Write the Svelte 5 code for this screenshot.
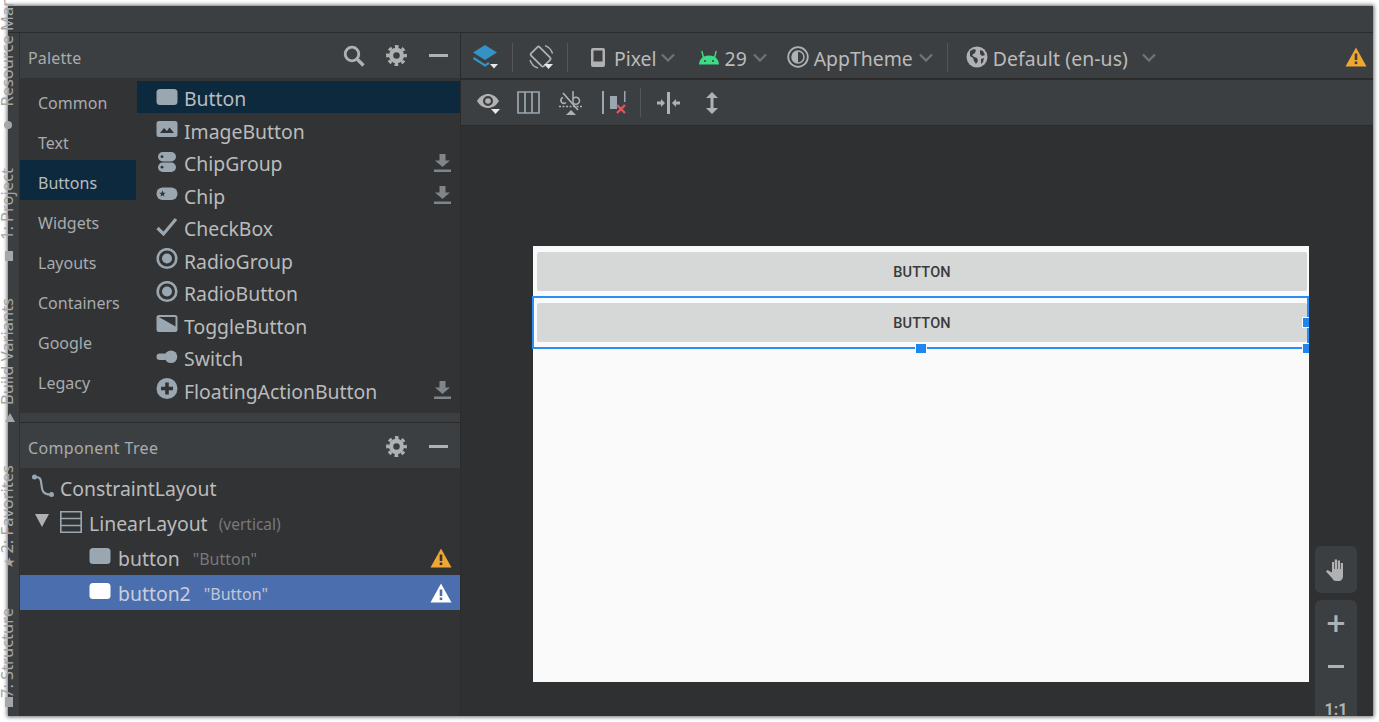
<script>
  const categories = ['Common', 'Text', 'Buttons', 'Widgets', 'Layouts', 'Containers', 'Google', 'Legacy'];
  const items = [
    { name: 'Button', icon: 'button' },
    { name: 'ImageButton', icon: 'image' },
    { name: 'ChipGroup', icon: 'chipgroup', dl: true },
    { name: 'Chip', icon: 'chip', dl: true },
    { name: 'CheckBox', icon: 'check' },
    { name: 'RadioGroup', icon: 'radio' },
    { name: 'RadioButton', icon: 'radio' },
    { name: 'ToggleButton', icon: 'toggle' },
    { name: 'Switch', icon: 'switch' },
    { name: 'FloatingActionButton', icon: 'fab', dl: true }
  ];
  const rail = [
    { label: 'Resource Manager', cls: 'r1' },
    { label: '1: Project', cls: 'r2' },
    { label: 'Build Variants', cls: 'r3' },
    { label: '2: Favorites', cls: 'r4' },
    { label: '7: Structure', cls: 'r5' }
  ];
</script>

{#snippet gear()}
  <svg class="hicon gear" viewBox="0 0 22 22"><circle cx="11" cy="11" r="8" fill="#afb1b3"/><circle cx="11" cy="11" r="9.400" fill="none" stroke="#afb1b3" stroke-width="3" stroke-dasharray="3.900 3.480" stroke-dashoffset="1.950"/><circle cx="11" cy="11" r="3.400" fill="#3c3f41"/></svg>
{/snippet}

{#snippet warn(color, mark)}
  <svg class="warn" viewBox="0 0 22 20"><path fill={color} d="M11 0.5 21.5 19.5H.5z"/><rect x="9.700" y="6.500" width="2.600" height="6.500" fill={mark}/><rect x="9.700" y="14.500" width="2.600" height="2.600" fill={mark}/></svg>
{/snippet}

{#snippet chev()}
  <svg class="chev" viewBox="0 0 14 9"><path fill="none" stroke="#6e7578" stroke-width="2.200" d="M1 1.500l6 6 6-6"/></svg>
{/snippet}

{#snippet btnIcon(color)}
  <svg class="ic" viewBox="0 0 22 22"><rect x="0.500" y="3" width="21" height="16" rx="3.500" fill={color}/></svg>
{/snippet}

{#snippet icon(name)}
  {#if name === 'button'}
    {@render btnIcon('#9aa7b0')}
  {:else if name === 'image'}
    <svg class="ic" viewBox="0 0 22 22"><rect x="0.500" y="3" width="21" height="16" rx="2.500" fill="#9aa7b0"/><path fill="#313335" d="M4 15l4-5 3 3 2.500-3.500L18 15z"/></svg>
  {:else if name === 'chipgroup'}
    <svg class="ic" viewBox="0 0 22 22"><rect x="2" y="1" width="18" height="9.500" rx="4.700" fill="#9aa7b0"/><rect x="2" y="11.500" width="18" height="9.500" rx="4.700" fill="#9aa7b0"/><circle cx="6" cy="5.700" r="1.400" fill="#313335"/><circle cx="6" cy="16.200" r="1.400" fill="#313335"/></svg>
  {:else if name === 'chip'}
    <svg class="ic" viewBox="0 0 22 22"><rect x="0.500" y="4.500" width="21" height="12.500" rx="6" fill="#9aa7b0"/><path fill="#313335" d="M6.500 7.500l.9 2.200 2.200.1-1.700 1.400.6 2.200-2-1.200-2 1.200.6-2.200-1.700-1.400 2.200-.1z"/></svg>
  {:else if name === 'check'}
    <svg class="ic" viewBox="0 0 22 22"><path fill="none" stroke="#9aa7b0" stroke-width="3.200" d="M1.500 12l6 6L20 3"/></svg>
  {:else if name === 'radio'}
    <svg class="ic" viewBox="0 0 22 22"><circle cx="11" cy="10.500" r="9.300" fill="none" stroke="#9aa7b0" stroke-width="2.600"/><circle cx="11" cy="10.500" r="5" fill="#9aa7b0"/></svg>
  {:else if name === 'toggle'}
    <svg class="ic" viewBox="0 0 22 22"><rect x="1.500" y="3" width="19" height="15" rx="1.500" fill="none" stroke="#9aa7b0" stroke-width="2"/><path fill="#9aa7b0" d="M2 3.500L20.500 14v4H2z"/></svg>
  {:else if name === 'switch'}
    <svg class="ic" viewBox="0 0 22 22"><rect x="0.500" y="7.500" width="11" height="6.500" rx="3.200" fill="#9aa7b0"/><circle cx="15" cy="10.700" r="6.300" fill="#9aa7b0"/></svg>
  {:else if name === 'fab'}
    <svg class="ic" viewBox="0 0 22 22"><circle cx="11" cy="10.500" r="10.500" fill="#9aa7b0"/><path fill="#313335" d="M9.200 4.500h3.600v4.200H17v3.600h-4.200v4.200H9.200v-4.200H5V8.700h4.200z"/></svg>
  {/if}
{/snippet}

<div class="window">
  <div class="topbar"></div>
  <div class="main">
    <div class="rail">
      {#each rail as r}
        <span class="railtext {r.cls}">{r.label}</span>
      {/each}
      <span class="rdot"></span>
      <span class="rsq a"></span>
      <span class="rtri"></span>
      <span class="rstar">★</span>
      <span class="rsq b"></span>
    </div>
    <div class="left">
      <div class="phead">
        <span class="ptitle">Palette</span>
        <svg class="hicon search" viewBox="0 0 22 22"><circle cx="9" cy="9" r="6.800" fill="none" stroke="#afb1b3" stroke-width="2.800"/><path stroke="#afb1b3" stroke-width="3.400" d="M14 14l6.500 6.500"/></svg>
        {@render gear()}
        <span class="minus"></span>
      </div>
      <div class="pbody">
        <div class="cats">
          {#each categories as c}
            <div class="cat" class:on={c === 'Buttons'}>{c}</div>
          {/each}
        </div>
        <div class="items">
          {#each items as it, i}
            <div class="item" class:on={i === 0}>
              {@render icon(it.icon)}
              <span class="iname">{it.name}</span>
              {#if it.dl}
                <svg class="dl" viewBox="0 0 17 19"><path fill="#7e868b" d="M5.500 0h6v6.500H16L8.500 13 1 6.500h4.500zM0 15.500h17V18H0z"/></svg>
              {/if}
            </div>
          {/each}
        </div>
      </div>
      <div class="band"></div>
      <div class="phead tree-head">
        <span class="ptitle">Component Tree</span>
        {@render gear()}
        <span class="minus"></span>
      </div>
      <div class="tree">
        <div class="row rconstraint">
          <svg class="ic2" viewBox="0 0 24 24"><circle cx="3.500" cy="3" r="2.500" fill="#9aa7b0"/><circle cx="20.500" cy="20.500" r="2.500" fill="#9aa7b0"/><path fill="none" stroke="#9aa7b0" stroke-width="2.200" d="M4 3c6 0 6 3 6.500 8s1 9.500 9 9.500"/></svg>
          <span class="tname">ConstraintLayout</span>
        </div>
        <div class="row rlinear">
          <svg class="tri" viewBox="0 0 14 13"><path fill="#afb1b3" d="M0 0h14L7 13z"/></svg>
          <svg class="ic3" viewBox="0 0 22 22"><path fill="none" stroke="#9aa7b0" stroke-width="1.600" d="M.8.800h20.400v20.400H.8zM.8 7.500h20.400M.8 14.500h20.400"/></svg>
          <span class="tname">LinearLayout</span>
          <span class="hint hint1">(vertical)</span>
        </div>
        <div class="row rbtn">
          {@render btnIcon('#9aa7b0')}
          <span class="tname">button</span>
          <span class="hint">"Button"</span>
          <span class="grow"></span>
          {@render warn('#f0a732', '#313335')}
        </div>
        <div class="row rbtn sel">
          {@render btnIcon('#ffffff')}
          <span class="tname">button2</span>
          <span class="hint">"Button"</span>
          <span class="grow"></span>
          {@render warn('#ffffff', '#4b6eaf')}
        </div>
      </div>
    </div>
    <div class="design">
      <div class="tb1">
        <svg class="t-layers" viewBox="0 0 27 27"><path fill="#3592c4" d="M13 1l12 7.500L13 16 1 8.500z"/><path fill="none" stroke="#3592c4" stroke-width="2.200" d="M1.500 14L13 21.500 17 19"/><path fill="#e8e8e8" d="M18 20h8l-4 4.500z"/></svg>
        <span class="sep s1"></span>
        <svg class="t-rot" viewBox="0 0 27 27"><rect x="7" y="3.500" width="12" height="18" rx="1.500" fill="none" stroke="#afb1b3" stroke-width="1.800" transform="rotate(-45 13 13)"/><path fill="none" stroke="#afb1b3" stroke-width="1.400" d="M17 1.600a12 12 0 0 1 7.500 8M2 16a12 12 0 0 0 8 8"/><path fill="#e8e8e8" d="M16 20h9l-4.500 5z"/></svg>
        <span class="sep s2"></span>
        <svg class="t-phone" viewBox="0 0 14 19"><path fill="#afb1b3" fill-rule="evenodd" d="M2 0h10a2 2 0 0 1 2 2v15a2 2 0 0 1-2 2H2a2 2 0 0 1-2-2V2a2 2 0 0 1 2-2zm.5 2.500v11h9v-11z"/></svg>
        <span class="ttxt pixel">Pixel</span>
        {@render chev()}
        <svg class="t-android" viewBox="0 0 20 15"><path fill="#3ddc84" d="M0 14.500C.3 9.500 3.500 5.500 10 5.500s9.700 4 10 9z"/><path stroke="#3ddc84" stroke-width="1.400" d="M4.500 7.500L2.800 1M15.500 7.500L17.200 1"/><circle cx="6" cy="11" r="1" fill="#3c3f41"/><circle cx="14" cy="11" r="1" fill="#3c3f41"/></svg>
        <span class="ttxt api">29</span>
        {@render chev()}
        <svg class="t-theme" viewBox="0 0 22 22"><circle cx="11" cy="11" r="9.800" fill="none" stroke="#afb1b3" stroke-width="1.800"/><circle cx="11" cy="11" r="6" fill="none" stroke="#afb1b3" stroke-width="1.500"/><path fill="#afb1b3" d="M11 5a6 6 0 0 0 0 12z"/></svg>
        <span class="ttxt theme">AppTheme</span>
        {@render chev()}
        <span class="sep s3"></span>
        <svg class="t-globe" viewBox="0 0 22 22"><circle cx="11" cy="11" r="10.500" fill="#afb1b3"/><path fill="#3c3f41" d="M4 5l4-2 2 1-1 3-3 2 2 2 3 1 1 3-2 3-2-3-1-3-3-2zM14 4l3 1 2 4-3 1-2-2zM15 13l3-1-1 4-2 2z"/></svg>
        <span class="ttxt locale">Default (en-us)</span>
        <span class="chevl">{@render chev()}</span>
        <span class="grow"></span>
        {@render warn('#f0a732', '#3c3f41')}
      </div>
      <div class="tb2">
        <svg class="b-eye" viewBox="0 0 26 24"><path fill="#afb1b3" fill-rule="evenodd" d="M0 9c3-5 7-7 11-7s8 2 11 7c-3 5-7 7-11 7S3 14 0 9zm11 5a5 5 0 1 0 0-10 5 5 0 0 0 0 10z"/><circle cx="11" cy="9" r="2.800" fill="#afb1b3"/><path fill="#e8e8e8" d="M14 17h9l-4.500 5z"/></svg>
        <svg class="b-cols" viewBox="0 0 23 23"><path fill="none" stroke="#9aa7b0" stroke-width="1.700" d="M1 1h21v21H1zM8 1v21M15 1v21"/></svg>
        <svg class="b-text" viewBox="0 0 26 26"><path fill="none" stroke="#afb1b3" stroke-width="1.500" d="M15 1v11.500M15 9a3.500 3.500 0 1 1 0 3.500"/><path fill="none" stroke="#afb1b3" stroke-width="1.300" stroke-dasharray="2 1.500" d="M1 16.500h24"/><path fill="none" stroke="#afb1b3" stroke-width="1.700" d="M5 3l15 17M5 7.500a3 3 0 1 0 3 5"/><path fill="#afb1b3" d="M8 25l5-5 5 5z"/></svg>
        <svg class="b-cons" viewBox="0 0 26 24"><rect x="0" y="0" width="2" height="23" fill="#9aa7b0"/><path fill="#9aa7b0" d="M8 5h7v13H8z"/><rect x="22" y="0" width="1.500" height="11" fill="#9aa7b0"/><path stroke="#db5860" stroke-width="2.400" d="M15 14l8 8M23 14l-8 8"/></svg>
        <span class="sep s4"></span>
        <svg class="b-h" viewBox="0 0 23 22"><rect x="10" y="0" width="3" height="22" fill="#afb1b3"/><path fill="#afb1b3" d="M0 9.500h4V7l4 4-4 4v-2.500H0zM23 9.500h-4V7l-4 4 4 4v-2.500h4z"/></svg>
        <svg class="b-v" viewBox="0 0 14 22"><path fill="#afb1b3" d="M7 0l6 6H8.500v10H13l-6 6-6-6h4.500V6H1z"/></svg>
      </div>
      <div class="canvas">
        <div class="screen">
          <div class="ab">BUTTON</div>
          <div class="ab second">BUTTON</div>
          <div class="selection">
            <span class="h hr"></span>
            <span class="h hb"></span>
            <span class="h hc"></span>
          </div>
        </div>
        <div class="tools">
          <div class="toolbox hand">
            <svg viewBox="0 0 22 24" class="handic"><path fill="#afb1b3" d="M7 4h2v7h.7V1.500h2.300V11h.7V2.500h2.300V11h.7V5h2.300v13c0 3-2 5-4.500 5H11c-2 0-3-1-4-3L1 13.500l1.500-1.500L7 14.500z"/></svg>
          </div>
          <div class="toolbox zoombox">
            <span class="zplus">+</span>
            <span class="zminus"></span>
            <span class="z11">1:1</span>
          </div>
        </div>
      </div>
    </div>
  </div>
</div>

<style>
  :global(body) { background: #fff; margin: 0; overflow: hidden; }
  .window {
    position: absolute; left: 8px; top: 6px; width: 1365px; height: 710px;
    background: #3c3f41; display: flex; flex-direction: column;
    font-family: "Noto Sans", sans-serif; color: #bbb;
    box-shadow: 0 0 4px 1px #6a6a6a;
  }
  .topbar { height: 26px; flex: none; border-bottom: 1px solid #2b2b2b; }
  .main { flex: 1; display: flex; min-height: 0; }
  .rail { width: 11px; flex: none; border-right: 1px solid #2f3133; position: relative; }
  .railtext {
    position: absolute; left: -9px; writing-mode: vertical-rl; transform: rotate(180deg);
    font-size: 16.500px; line-height: 16px; color: #a4a6a8; white-space: nowrap;
  }
  .r1 { top: -72px; }
  .r2 { top: 135px; }
  .r3 { top: 265px; }
  .r4 { top: 432px; }
  .r5 { top: 575px; }
  .rdot { position: absolute; left: -4px; top: 88px; width: 8px; height: 8px; border-radius: 50%; background: #a4a6a8; }
  .rsq { position: absolute; left: -3px; width: 8px; height: 10px; background: #a4a6a8; }
  .rsq.a { top: 218px; }
  .rsq.b { top: 664px; }
  .rtri { position: absolute; left: -3px; top: 380px; width: 0; height: 0; border-left: 5px solid transparent; border-right: 5px solid transparent; border-bottom: 9px solid #a4a6a8; }
  .rstar { position: absolute; left: -5px; top: 522px; font-size: 14px; line-height: 14px; color: #a4a6a8; font-family: "DejaVu Sans", sans-serif; }

  .left { width: 440px; flex: none; display: flex; flex-direction: column; border-right: 1px solid #2b2b2b; }
  .phead { height: 45px; flex: none; display: flex; align-items: center; padding-left: 8px; padding-right: 12px; background: #3c3f41; }
  .ptitle { font-size: 16px; color: #a9abad; flex: 1; padding-top: 5px; letter-spacing: .15px; }
  .hicon { width: 22px; height: 22px; margin-right: 22px; flex: none; }
  .search { margin-right: 22px; position: relative; left: 1px; }
  .gear { width: 21px; height: 21px; }
  .minus { width: 19px; height: 3px; background: #afb1b3; flex: none; }
  .pbody { height: 335px; flex: none; background: #313335; display: flex; }
  .cats { width: 116px; padding-top: 2px; margin-right: 1px; flex: none; }
  .cat { height: 40px; line-height: 46px; padding-left: 18px; font-size: 16px; color: #a9abad; }
  .cat.on { background: #0d293e; color: #bbb; }
  .items { flex: 1; padding-top: 3px; }
  .item { height: 32.500px; display: flex; align-items: center; padding-left: 19px; padding-right: 9px; }
  .item.on { background: #0d293e; height: 32px; margin-bottom: .5px; }
  .ic { width: 22px; height: 22px; flex: none; margin-top: -1px; }
  .iname { font-size: 19.400px; margin-left: 6px; flex: 1; color: #bbb; padding-top: 3px; }
  .dl { width: 17px; height: 19px; flex: none; margin-top: 2px; }
  .band { height: 9px; flex: none; border-bottom: 1px solid #2b2b2b; }
  .tree-head { padding-top: 2px; height: 43px; }
  .tree-head .ptitle { padding-top: 3px; letter-spacing: .35px; }
  .tree { flex: 1; background: #313335; padding-top: 2px; }
  .row { display: flex; align-items: center; height: 35px; }
  .rconstraint { padding-left: 11px; }
  .ic2 { width: 24px; height: 24px; flex: none; margin-right: 5px; margin-top: -4px; }
  .rlinear { padding-left: 15px; }
  .tri { width: 14px; height: 13px; margin-right: 11px; flex: none; margin-top: -4px; }
  .ic3 { width: 22px; height: 22px; margin-right: 7px; flex: none; margin-top: -1px; }
  .tname { font-size: 19.400px; color: #bbb; padding-top: 2px; }
  .hint { font-size: 16px; color: #77797b; margin-left: 13px; padding-top: 2px; }
  .hint1 { margin-left: 11px; font-size: 15.500px; }
  .rbtn { padding-left: 69px; padding-right: 8px; }
  .rbtn .ic { margin-top: -3px; margin-right: 7px; }
  .rbtn.sel { background: #4b6eaf; }
  .sel .tname { color: #c9cfd9; }
  .sel .hint { color: #c0c8d6; }
  .grow { flex: 1; }
  .warn { width: 22px; height: 20px; flex: none; }

  .design { flex: 1; display: flex; flex-direction: column; min-width: 0; }
  .tb1 { height: 42px; padding-top: 3px; flex: none; display: flex; align-items: center; padding-left: 11px; padding-right: 6px; border-bottom: 2px solid #2b2b2b; }
  .tb2 { height: 45px; flex: none; display: flex; align-items: center; padding-left: 16px; border-bottom: 1px solid #2b2b2b; }
  .t-layers { width: 27px; height: 27px; flex: none; }
  .t-rot { width: 27px; height: 27px; flex: none; margin-left: 15px; }
  .sep { width: 1px; height: 29px; background: #54575a; flex: none; }
  .s1 { margin-left: 13px; }
  .s2 { margin-left: 12px; }
  .s3 { margin-left: 14px; }
  .s4 { margin-left: 12px; }
  .t-phone { width: 14px; height: 19px; margin-left: 23px; flex: none; }
  .ttxt { font-size: 19.400px; color: #bbb; padding-top: 2px; }
  .pixel { margin-left: 9px; margin-right: -2px; }
  .chev { width: 14px; height: 9px; flex: none; margin-left: 6px; }
  .t-android { width: 20px; height: 15px; margin-left: 24px; flex: none; }
  .api { margin-left: 6px; }
  .t-theme { width: 22px; height: 22px; margin-left: 20px; flex: none; }
  .theme { margin-left: 5px; }
  .t-globe { width: 22px; height: 22px; margin-left: 18px; flex: none; }
  .locale { margin-left: 5px; letter-spacing: .1px; }
  .chevl { margin-left: 8px; display: flex; }
  .b-eye { width: 26px; height: 24px; flex: none; margin-top: 3px; }
  .b-cols { width: 23px; height: 23px; margin-left: 14px; flex: none; }
  .b-text { width: 26px; height: 26px; margin-left: 18px; flex: none; }
  .b-cons { width: 26px; height: 24px; margin-left: 18px; flex: none; }
  .b-h { width: 23px; height: 22px; margin-left: 16px; flex: none; }
  .b-v { width: 14px; height: 22px; margin-left: 25px; flex: none; }

  .canvas { flex: 1; background: #2e3032; position: relative; padding: 120px 0 0 72px; overflow: hidden; }
  .screen { width: 776px; height: 436px; background: #fafafa; position: relative; padding: 6px 2px 0 4px; box-sizing: border-box; }
  .ab {
    height: 39px; background: #d6d7d7; border-radius: 2px; display: flex; align-items: center; justify-content: center; padding-top: 2px; box-sizing: border-box;
    font-family: Roboto, sans-serif; font-size: 14.500px; font-weight: 500; color: #3a3a3a; letter-spacing: .2px;
  }
  .second { margin-top: 12px; }
  .selection { position: absolute; left: -1px; top: 50px; width: 777px; height: 53px; box-sizing: border-box; border: 2px solid #2a8ef5; }
  .h { position: absolute; box-sizing: border-box; background: #1d86f0; border: 1px solid #fafafa; }
  .hr { right: -2px; top: 19px; width: 7px; height: 11px; border-right: 0; }
  .hb { left: 381px; bottom: -7px; width: 12px; height: 11px; }
  .hc { right: -2px; bottom: -7px; width: 7px; height: 11px; border-right: 0; }
  .tools { position: absolute; right: 16px; top: 420px; width: 42px; display: flex; flex-direction: column; gap: 7px; }
  .toolbox { background: #3c3f41; border-radius: 6px; display: flex; flex-direction: column; align-items: center; }
  .hand { height: 47px; justify-content: center; }
  .handic { width: 22px; height: 24px; }
  .zoombox { height: 130px; position: relative; color: #afb1b3; }
  .zplus { font-family: "DejaVu Sans", sans-serif; font-size: 26px; line-height: 26px; margin-top: 10px; font-weight: 700; }
  .zminus { width: 16px; height: 3px; background: #afb1b3; margin-top: 29px; flex: none; }
  .z11 { font-family: Roboto, sans-serif; font-weight: 700; font-size: 16px; margin-top: 32px; line-height: 20px; }
</style>
